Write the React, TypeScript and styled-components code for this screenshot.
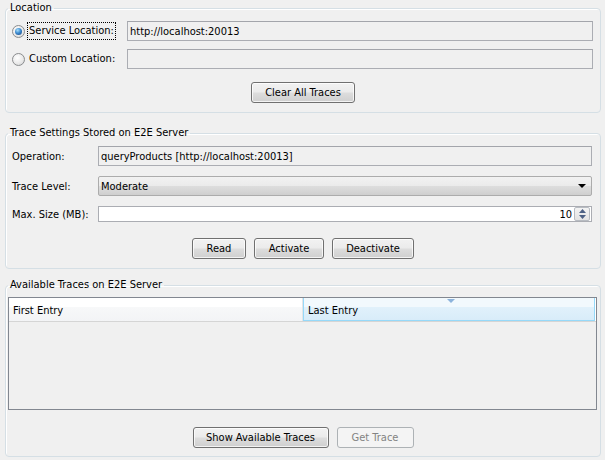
import React from "react";
import styled, { createGlobalStyle } from "styled-components";

const GlobalStyle = createGlobalStyle`
    html, body {
        margin: 0;
        padding: 0;
        background: #f0f0f0;
    }
    body {
        font-family: "DejaVu Sans Condensed", "DejaVu Sans", "Liberation Sans", sans-serif;
        font-stretch: condensed;
        font-size: 11px;
        color: #000;
    }
    * {
        box-sizing: border-box;
    }
`;

const Page = styled.div`
    width: 605px;
    height: 460px;
    padding: 1px 4px 0 5px;
    display: flex;
    flex-direction: column;
`;

const Group = styled.fieldset<{ $top: number; $bottom: number }>`
    margin: ${p => p.$top}px 0 0 0;
    padding: 0 2px ${p => p.$bottom}px 2px;
    border: 1px solid #d5dfe5;
    border-radius: 4px;
    box-shadow: inset 1px 1px 0 #fff;
    min-width: 0;
`;

const Legend = styled.legend`
    padding: 0 2px;
    line-height: 14px;
    font-size: 11px;
`;

const LocationGrid = styled.div`
    display: grid;
    grid-template-columns: 115px 1fr;
    row-gap: 8px;
    align-items: center;
    padding: 6px 5px 0 4px;
`;

const RadioLabel = styled.label`
    display: flex;
    align-items: center;
    gap: 3px;
    height: 20px;
`;

const Radio = styled.span<{ $checked?: boolean }>`
    width: 13px;
    height: 13px;
    border-radius: 50%;
    border: 1px solid #8a8c8e;
    background: radial-gradient(circle at 40% 35%, #ffffff 0%, #eaeaea 55%, #cfd0d1 100%);
    display: flex;
    align-items: center;
    justify-content: center;
    flex-shrink: 0;

    &::after {
        content: "";
        width: 7px;
        height: 7px;
        border-radius: 50%;
        background: ${p => p.$checked
            ? "radial-gradient(circle at 38% 32%, #a9e0fb 0%, #3d8bd0 45%, #173f78 100%)"
            : "transparent"};
    }
`;

const LabelText = styled.span<{ $focused?: boolean }>`
    padding: 1px 1px;
    outline: ${p => (p.$focused ? "1px dotted #000" : "none")};
    line-height: 14px;
`;

const TextField = styled.div<{ $white?: boolean; $height?: number }>`
    height: ${p => p.$height ?? 20}px;
    border: 1px solid #abadb3;
    border-top-color: #a3a5ab;
    background: ${p => (p.$white ? "#fff" : "#f0f0f0")};
    display: flex;
    align-items: center;
    padding: 0 2px;
    white-space: nowrap;
    overflow: hidden;
`;

const ButtonRow = styled.div<{ $top: number }>`
    display: flex;
    justify-content: center;
    gap: 8px;
    margin-top: ${p => p.$top}px;
`;

const Button = styled.button<{ $width: number }>`
    width: ${p => p.$width}px;
    height: 21px;
    padding: 0;
    font: inherit;
    font-size: 11px;
    color: #000;
    border: 1px solid #707070;
    border-radius: 3px;
    background: linear-gradient(to bottom, #f2f2f2 0%, #ebebeb 48%, #dddddd 52%, #cfcfcf 100%);
    box-shadow: inset 0 0 0 1px rgba(255, 255, 255, 0.75);

    &:disabled {
        color: #838383;
        border-color: #adb2b5;
        background: #f4f4f4;
        box-shadow: none;
    }
`;

const SettingsGrid = styled.div`
    display: grid;
    grid-template-columns: 86px 1fr;
    row-gap: 10px;
    align-items: center;
    padding: 6px 6px 0 4px;
`;

const Combo = styled.div`
    height: 20px;
    border: 1px solid #acacac;
    border-radius: 2px;
    background: linear-gradient(to bottom, #f2f2f2 0%, #ebebeb 48%, #dddddd 52%, #cfcfcf 100%);
    display: flex;
    align-items: center;
    justify-content: space-between;
    padding: 0 5px 0 2px;
`;

const ComboArrow = styled.span`
    width: 0;
    height: 0;
    border-left: 4px solid transparent;
    border-right: 4px solid transparent;
    border-top: 4px solid #000;
`;

const Spinner = styled.div`
    height: 16px;
    border: 1px solid #abadb3;
    background: #fff;
    display: flex;
    align-items: center;
    justify-content: flex-end;
    padding: 0 1px 0 2px;
    gap: 2px;
`;

const SpinButtons = styled.div`
    width: 16px;
    height: 14px;
    display: flex;
    flex-direction: column;
    border: 1px solid #b8bcc2;
    border-radius: 2px;
    background: linear-gradient(to bottom, #f3f3f3, #e3e3e3);
`;

const SpinHalf = styled.div`
    flex: 1;
    display: flex;
    align-items: center;
    justify-content: center;
`;

const TableBox = styled.div`
    margin: 5px 1px 0 0;
    height: 113px;
    border: 1px solid #828790;
    background: #f0f0f0;
    display: flex;
    flex-direction: column;
`;

const HeaderRow = styled.div`
    display: grid;
    grid-template-columns: 294px 1fr;
    height: 24px;
    padding-right: 1px;
    border-bottom: 1px solid #d5d5d5;
    background: #fff;
`;

const HeaderCell = styled.div<{ $active?: boolean }>`
    position: relative;
    display: flex;
    align-items: center;
    padding: 2px 4px 0 4px;
    border-right: 1px solid ${p => (p.$active ? "#96d9f9" : "#e3e5e8")};
    border-left: ${p => (p.$active ? "1px solid #96d9f9" : "none")};
    border-bottom: ${p => (p.$active ? "1px solid #96d9f9" : "none")};
    background: ${p => p.$active
        ? "linear-gradient(to bottom, #f2f9fd 0%, #f2f9fd 40%, #e1f1fb 41%, #d8ecf9 100%)"
        : "linear-gradient(to bottom, #ffffff 0%, #ffffff 40%, #f7f8f9 41%, #f3f4f6 100%)"};
`;

const SortArrow = styled.span`
    position: absolute;
    top: 1px;
    left: 143px;
    width: 0;
    height: 0;
    border-left: 4px solid transparent;
    border-right: 4px solid transparent;
    border-top: 4px solid #8cb3dc;
`;

export default function App() {
    return (
        <Page>
            <GlobalStyle />

            <Group $top={0} $bottom={9}>
                <Legend>Location</Legend>
                <LocationGrid>
                    <RadioLabel>
                        <Radio $checked />
                        <LabelText $focused>Service Location:</LabelText>
                    </RadioLabel>
                    <TextField>http://localhost:20013</TextField>
                    <RadioLabel>
                        <Radio />
                        <LabelText>Custom Location:</LabelText>
                    </RadioLabel>
                    <TextField />
                </LocationGrid>
                <ButtonRow $top={13}>
                    <Button $width={104}>Clear All Traces</Button>
                </ButtonRow>
            </Group>

            <Group $top={13} $bottom={9}>
                <Legend>Trace Settings Stored on E2E Server</Legend>
                <SettingsGrid>
                    <span>Operation:</span>
                    <TextField>queryProducts [http://localhost:20013]</TextField>
                    <span>Trace Level:</span>
                    <Combo>
                        <span>Moderate</span>
                        <ComboArrow />
                    </Combo>
                    <span>Max. Size (MB):</span>
                    <Spinner>
                        <span>10</span>
                        <SpinButtons>
                            <SpinHalf>
                                <svg width="7" height="4" viewBox="0 0 7 4">
                                    <path d="M0 4 L3.5 0 L7 4 Z" fill="#4d6185" />
                                </svg>
                            </SpinHalf>
                            <SpinHalf>
                                <svg width="7" height="4" viewBox="0 0 7 4">
                                    <path d="M0 0 L3.5 4 L7 0 Z" fill="#4d6185" />
                                </svg>
                            </SpinHalf>
                        </SpinButtons>
                    </Spinner>
                </SettingsGrid>
                <ButtonRow $top={16}>
                    <Button $width={54}>Read</Button>
                    <Button $width={70}>Activate</Button>
                    <Button $width={82}>Deactivate</Button>
                </ButtonRow>
            </Group>

            <Group $top={9} $bottom={8}>
                <Legend>Available Traces on E2E Server</Legend>
                <TableBox>
                    <HeaderRow>
                        <HeaderCell>First Entry</HeaderCell>
                        <HeaderCell $active>
                            <SortArrow />
                            Last Entry
                        </HeaderCell>
                    </HeaderRow>
                </TableBox>
                <ButtonRow $top={17}>
                    <Button $width={136}>Show Available Traces</Button>
                    <Button $width={77} disabled>Get Trace</Button>
                </ButtonRow>
            </Group>
        </Page>
    );
}
